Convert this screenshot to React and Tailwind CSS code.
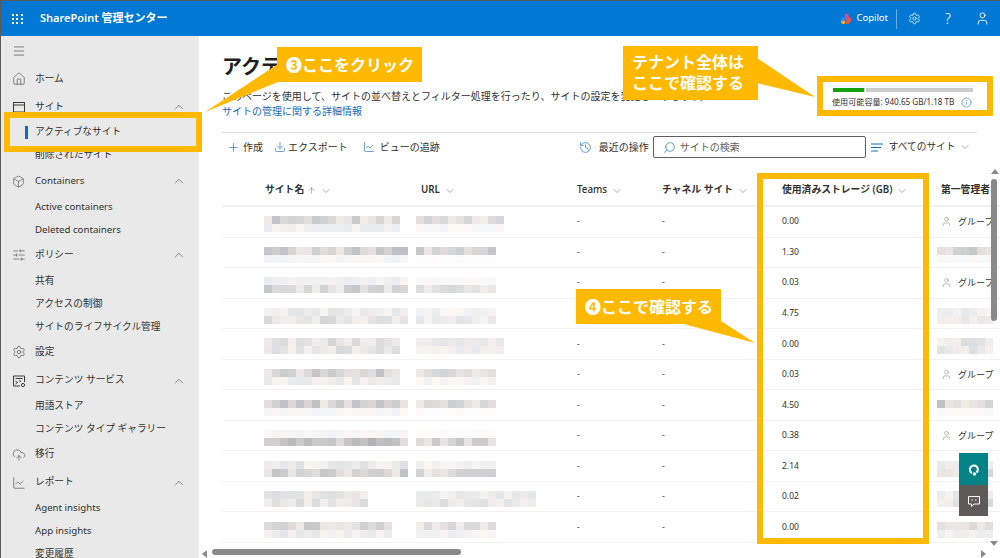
import React from 'react';
import { House, Box, SlidersHorizontal, Settings, CloudUpload, ChartLine, ChevronUp, ChevronDown, Plus, Download, History, Search, Info, User, ArrowUp, Menu } from 'lucide-react';

const font = "font-['Noto_Sans','Noto_Sans_CJK_JP','DejaVu_Sans',sans-serif]";

// blurred names in the table, drawn as a mosaic
const shade = (seed, base) => {
  const x = Math.sin(seed * 12.9898) * 43758.5453;
  const r = x - Math.floor(x);
  const v = Math.round(base + r * (250 - base) * 0.75);
  const tint = Math.round(r * 7) - 3;
  return `rgb(${v + tint},${v},${v - tint})`;
};

const Mosaic = ({ cells, top, bottom, seed }) => (
  <svg width={cells * 8} height={16} className="block shrink-0">
    {Array.from({ length: cells }).map((_, i) => (
      <g key={i}>
        <rect x={i * 8} y={0} width={8} height={8} fill={shade(seed + i, top)} />
        <rect x={i * 8} y={8} width={8} height={8} fill={shade(seed + i + 50, bottom)} />
      </g>
    ))}
  </svg>
);

const rows = [
  { size: '0.00', name: 17, url: 11, top: 195, bottom: 235, admin: true },
  { size: '1.30', name: 18, url: 10, top: 185, bottom: 243, admin: false },
  { size: '0.03', name: 18, url: 10, top: 238, bottom: 200, admin: true },
  { size: '4.75', name: 18, url: 10, top: 228, bottom: 215, admin: false },
  { size: '0.00', name: 17, url: 11, top: 215, bottom: 218, admin: false },
  { size: '0.03', name: 17, url: 10, top: 195, bottom: 228, admin: true },
  { size: '4.50', name: 18, url: 10, top: 188, bottom: 243, admin: false },
  { size: '0.38', name: 18, url: 10, top: 243, bottom: 172, admin: true },
  { size: '2.14', name: 18, url: 10, top: 225, bottom: 190, admin: false },
  { size: '0.02', name: 13, url: 15, top: 218, bottom: 210, admin: false },
  { size: '0.00', name: 16, url: 10, top: 195, bottom: 228, admin: false },
];

const SiteIcon = () => (
  <svg width="14" height="14" viewBox="0 0 14 14" fill="none" stroke="#3b3a39" strokeWidth="1">
    <rect x="1.5" y="2.500" width="11" height="9.500" />
    <path d="M1.500 5h11" />
  </svg>
);

const ContentIcon = () => (
  <svg width="14" height="14" viewBox="0 0 14 14" fill="none" stroke="#3b3a39" strokeWidth="1">
    <path d="M8 12H1.500V2h11v6" />
    <path d="M3.500 4.500h7M3.500 7l2 1.500L3.500 10M7 7h2" />
    <circle cx="11" cy="11" r="1.600" />
  </svg>
);

const Heading = ({ icon, label, open }) => (
  <div className="flex h-[28.1px] shrink-0 items-center pl-[11px] pr-[10px] text-[9.7px] text-[#323130]">
    <span className="flex w-[23px] items-center">{icon}</span>
    <span className="flex-1 whitespace-nowrap">{label}</span>
    {open && <ChevronUp size={14} strokeWidth={1} color="#3b3a39" className="mr-[3px]" />}
  </div>
);

const Sub = ({ label, active }) => (
  <div className="relative flex h-[23px] shrink-0 items-center pl-[34px] text-[9.7px] whitespace-nowrap text-[#323130]">
    {active && <span className="absolute left-[24px] h-[13px] w-[3px] bg-[#0f6cbd]" />}
    {label}
  </div>
);

const Sidebar = () => (
  <aside className="flex w-[198px] shrink-0 flex-col overflow-hidden bg-[#e9e9e9]">
    <div className="flex h-[29px] shrink-0 items-center pl-[11px]">
      <Menu size={14} strokeWidth={1} color="#323130" />
    </div>
    <Heading icon={<House size={14} strokeWidth={1} color="#3b3a39" />} label="ホーム" />
    <Heading icon={<SiteIcon />} label="サイト" open />
    <Sub label="アクティブなサイト" active />
    <Sub label="削除されたサイト" />
    <Heading icon={<Box size={13} strokeWidth={1} color="#3b3a39" />} label="Containers" open />
    <Sub label="Active containers" />
    <Sub label="Deleted containers" />
    <Heading icon={<SlidersHorizontal size={14} strokeWidth={1} color="#3b3a39" />} label="ポリシー" open />
    <Sub label="共有" />
    <Sub label="アクセスの制御" />
    <Sub label="サイトのライフサイクル管理" />
    <Heading icon={<Settings size={14} strokeWidth={1} color="#3b3a39" />} label="設定" />
    <Heading icon={<ContentIcon />} label="コンテンツ サービス" open />
    <Sub label="用語ストア" />
    <Sub label="コンテンツ タイプ ギャラリー" />
    <Heading icon={<CloudUpload size={14} strokeWidth={1} color="#3b3a39" />} label="移行" />
    <Heading icon={<ChartLine size={14} strokeWidth={1} color="#3b3a39" />} label="レポート" open />
    <Sub label="Agent insights" />
    <Sub label="App insights" />
    <Sub label="変更履歴" />
  </aside>
);

const TopBar = () => (
  <header className="flex h-[35px] shrink-0 items-center bg-[#0078d4] text-white">
    <div className="ml-[11px] grid w-[11px] grid-cols-3 gap-[2px]">
      {Array.from({ length: 9 }).map((_, i) => (
        <span key={i} className="h-[2px] w-[2px] bg-white" />
      ))}
    </div>
    <span className="ml-[17px] text-[11px] font-semibold">SharePoint 管理センター</span>
    <div className="ml-auto flex items-center">
      <svg width="12" height="12" viewBox="0 0 13 13">
        <path d="M1 8c0-2 2-4 4-4v5H2.500z" fill="#2f8fd8" />
        <path d="M5 3c0-2 2-3 4-2l1 4-4 3z" fill="#c84fa8" />
        <path d="M8 5l4 0c1 3-1 6-3 7H6z" fill="#e8574a" />
        <path d="M1 9l5-1-1 4c-2 0-4 0-4-3z" fill="#f5b72f" />
      </svg>
      <span className="ml-[4px] text-[9.5px]">Copilot</span>
      <span className="ml-[8px] h-[20px] w-px bg-white/40" />
      <Settings size={13} strokeWidth={1.4} className="ml-[11px]" />
      <span className="ml-[24px] text-[14px] leading-none font-light">?</span>
      <User size={15} strokeWidth={1.4} className="mr-[10px] ml-[24px]" />
    </div>
  </header>
);

const Th = ({ children, light, icon = true }) => (
  <div className={`flex items-center gap-[4px] text-[9.8px] whitespace-nowrap text-[#323130] ${light ? 'font-medium' : 'font-semibold'}`}>
    {children}
    {icon && <ChevronDown size={12} strokeWidth={1} color="#605e5c" />}
  </div>
);

const gridCols = 'grid grid-cols-[43px_156px_156px_85px_120px_159px_60px]';

const Table = () => (
  <div className="mt-[15px] ml-[23px] w-[800px]">
    <div className={`${gridCols} h-[31px] items-center border-b-2 border-[#f3f2f1]`}>
      <div />
      <Th>
        サイト名
        <ArrowUp size={9} strokeWidth={1.2} color="#605e5c" className="-ml-[1px]" />
      </Th>
      <Th>URL</Th>
      <Th light>Teams</Th>
      <Th>チャネル サイト</Th>
      <Th>使用済みストレージ (GB)</Th>
      <Th icon={false}>第一管理者</Th>
    </div>
    {rows.map((row, i) => (
      <div key={i} className={`${gridCols} h-[30.55px] items-center border-b border-[#f3f2f1] text-[8.5px] text-[#323130]`}>
        <div />
        <div className="-ml-px pt-[5px]">
          <Mosaic cells={row.name} top={row.top} bottom={row.bottom} seed={i * 31 + 1} />
        </div>
        <div className="-ml-[5px] pt-[5px]">
          <Mosaic cells={row.url} top={row.top + 10} bottom={row.bottom + 10} seed={i * 17 + 200} />
        </div>
        <span>-</span>
        <span>-</span>
        <span>{row.size}</span>
        {row.admin ? (
          <div className="flex items-center gap-[6px] whitespace-nowrap">
            <User size={11} strokeWidth={1} color="#7a6f6a" />
            <span className="text-[9px]">グループ</span>
          </div>
        ) : (
          <div className="-ml-[4px] pt-[5px]">
            <Mosaic cells={7} top={row.top + 5} bottom={row.bottom + 5} seed={i * 7 + 400} />
          </div>
        )}
      </div>
    ))}
  </div>
);

const Main = () => (
  <main className="relative flex min-w-0 flex-1 flex-col overflow-hidden bg-white">
    <h1 className="mt-[17px] ml-[23px] text-[20px] leading-[28px] font-semibold whitespace-nowrap text-[#201f1e]">アクティブなサイト</h1>
    <p className="mt-[9px] ml-[23px] text-[10px] leading-[13px] whitespace-nowrap text-[#323130]">
      このページを使用して、サイトの並べ替えとフィルター処理を行ったり、サイトの設定を変更したりします。
    </p>
    <a className="mt-px ml-[23px] text-[10px] leading-[14px] text-[#0f6cbd]">サイトの管理に関する詳細情報</a>
    <div className="mt-[14px] ml-[23px] flex h-[29px] w-[755px] shrink-0 items-center border-t border-[#e1dfdd] text-[10px] whitespace-nowrap text-[#323130]">
      <Plus size={13} strokeWidth={1.2} color="#0f6cbd" className="ml-[5px]" />
      <span className="ml-[3px]">作成</span>
      <Download size={12} strokeWidth={1.2} color="#0f6cbd" className="ml-[11px]" />
      <span className="ml-[2px]">エクスポート</span>
      <ChartLine size={12} strokeWidth={1.2} color="#0f6cbd" className="ml-[15px]" />
      <span className="ml-[5px]">ビューの追跡</span>
      <History size={13} strokeWidth={1.2} color="#0f6cbd" className="ml-[139px]" />
      <span className="ml-[7px]">最近の操作</span>
      <div className="ml-[4px] flex h-[22px] w-[213px] shrink-0 items-center rounded-[2px] border border-[#605e5c]">
        <Search size={13} strokeWidth={1.2} color="#0f6cbd" className="ml-[9px] -scale-x-100" />
        <span className="ml-[4px] text-[#605e5c]">サイトの検索</span>
      </div>
      <svg width="12" height="9" viewBox="0 0 12 9" className="ml-[5px] shrink-0" stroke="#0f6cbd" strokeWidth="1">
        <path d="M0 1h12M0 4.500h10M0 8h7" />
      </svg>
      <span className="ml-[6px] text-[9.7px]">すべてのサイト</span>
      <ChevronDown size={12} strokeWidth={1} color="#605e5c" className="ml-[4px] shrink-0" />
    </div>
    <Table />
  </main>
);

const Scrollbars = () => (
  <>
    <div className="absolute top-[168px] left-[990px] h-0 w-0 border-x-[4px] border-b-[5px] border-x-transparent border-b-[#8a8a8a]" />
    <div className="absolute top-[178px] left-[990px] h-[142px] w-[6px] rounded-full bg-[#8a8a8a]" />
    <div className="absolute top-[540px] left-[989px] h-0 w-0 border-x-[4px] border-t-[5px] border-x-transparent border-t-[#8a8a8a]" />
    <div className="absolute top-[549px] left-[201px] h-0 w-0 border-y-[4px] border-r-[5px] border-y-transparent border-r-[#8a8a8a]" />
    <div className="absolute top-[548px] left-[211px] h-[6px] w-[249px] rounded-full bg-[#8a8a8a]" />
    <div className="absolute top-[549px] left-[980px] h-0 w-0 border-y-[4px] border-l-[5px] border-y-transparent border-l-[#8a8a8a]" />
  </>
);

const Highlight = ({ className }) => <div className={`absolute border-[6px] border-[#ffb900] ${className}`} />;

const CalloutBox = ({ className, children }) => (
  <div className={`absolute bg-[#ffb900] font-bold text-white ${className}`}>{children}</div>
);

// root has a 1px top/left border, so offsets are one less than picture coordinates
const Annotations = () => (
  <>
    <svg width="1000" height="558" className="pointer-events-none absolute top-0 left-0" fill="#ffb900">
      <polygon points="277,63 204,111 277,81" />
      <polygon points="756,57 814,96 756,82" />
      <polygon points="679,322 754,342 720,320" />
    </svg>
    <Highlight className="top-[111px] left-[3px] h-[40px] w-[198px]" />
    <Highlight className="top-[172px] left-[756px] h-[371px] w-[172px]" />
    <CalloutBox className="top-[46px] left-[276px] flex h-[35px] w-[145px] items-center pl-[9px] text-[16px] whitespace-nowrap">
      ❸ここをクリック
    </CalloutBox>
    <CalloutBox className="top-[45px] left-[622px] flex h-[54px] w-[135px] flex-col justify-center pl-[9px] text-[16px] leading-[21px] whitespace-nowrap">
      <span>テナント全体は</span>
      <span>ここで確認する</span>
    </CalloutBox>
    <CalloutBox className="top-[288px] left-[575px] flex h-[35px] w-[145px] items-center pl-[9px] text-[16px] whitespace-nowrap">
      ❹ここで確認する
    </CalloutBox>
    <div className="absolute top-[75px] left-[816px] h-[40px] w-[176px] border-[6px] border-[#ffb900] bg-white pt-[6px] pl-[10px] text-[8.1px] whitespace-nowrap text-[#323130]">
      <div className="flex h-[4px] w-[140px] gap-[1px] bg-[#cccccc]">
        <div className="h-full w-[31px] bg-[#13a10e]" />
        <div className="w-px bg-white" />
      </div>
      <div className="mt-[4px] -ml-px flex items-center">
        <span>使用可能容量: 940.65 GB/1.18 TB</span>
        <Info size={11} strokeWidth={1.2} color="#0f6cbd" className="ml-[7px]" />
      </div>
    </div>
    <div className="absolute top-[452px] left-[958px] flex h-[32px] w-[29px] items-center justify-center bg-[#038387]">
      <svg width="12" height="13" viewBox="0 0 12 13" fill="none" stroke="white" strokeWidth="2">
        <path d="M4 10A4 4 0 1 1 8.500 9.500" />
        <circle cx="6.500" cy="11" r="0.800" fill="white" />
      </svg>
    </div>
    <div className="absolute top-[484px] left-[958px] flex h-[31px] w-[29px] items-center justify-center bg-[#5d5a58]">
      <svg width="14" height="14" viewBox="0 0 14 14" fill="none" stroke="white" strokeWidth="1">
        <path d="M1.500 2.500h11v7.500H7l-2.500 2.500V10h-3z" />
        <path d="M4.500 6h1.500M8 6h1.500" />
      </svg>
    </div>
  </>
);

export default function App() {
  return (
    <div className={`relative flex h-[558px] w-[1000px] flex-col overflow-hidden border-t border-l border-[#5a5a5a] bg-white ${font}`}>
      <TopBar />
      <div className="flex min-h-0 flex-1">
        <Sidebar />
        <Main />
      </div>
      <Scrollbars />
      <Annotations />
    </div>
  );
}
